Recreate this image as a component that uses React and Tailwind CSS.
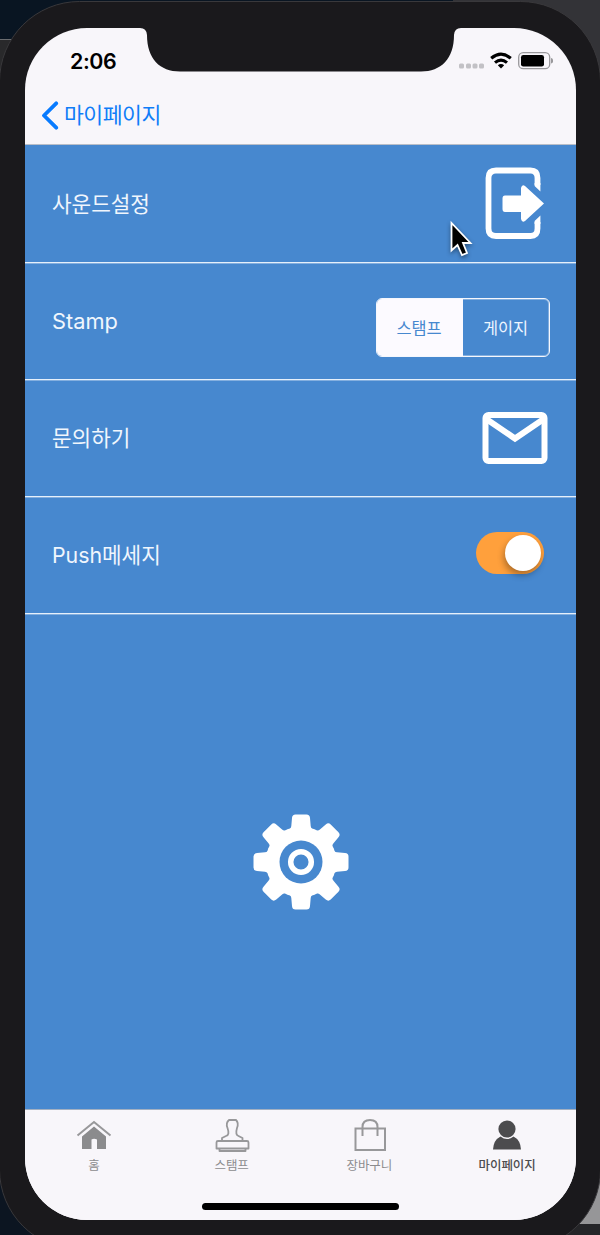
import React from "react";

const font = "font-['Inter','Noto_Sans_CJK_KR',sans-serif]";

function Row({ label, height, children }) {
  return (
    <div className={`flex items-center border-b border-[#e6f0fb] pl-[27px] shadow-[0_1px_0_#ffffff55] ${height}`}>
      <span className="flex-1 text-[21.3px] font-normal leading-[30px] text-[#f0f6fd]">{label}</span>
      {children}
    </div>
  );
}

function Tab({ label, active, children }) {
  return (
    <div className={`flex flex-1 flex-col items-center ${active ? "text-[#4c4c4e]" : "text-[#98989a]"}`}>
      <svg width="38" height="38" viewBox="0 0 38 38" fill="none">{children}</svg>
      <span className={`mt-[2px] text-[12.5px] leading-[16px] tracking-[-0.1px] ${active ? "font-medium" : "text-[#8c8c8e]"}`}>{label}</span>
    </div>
  );
}

export default function App() {
  return (
    <div className={`relative h-[1235px] w-[600px] overflow-hidden bg-[#151517] ${font}`}>
      <svg className="absolute inset-0" width="600" height="1235">
        <rect width="453" height="39" fill="#091522" />
        <rect y="39" width="60" height="1" fill="#6a6c6f" />
        <rect y="40" width="60" height="400" fill="#29292b" />
        <rect x="453" width="147" height="246" fill="#333337" />
        <rect y="1150" width="60" height="85" fill="#0c1521" />
        <rect x="540" y="1140" width="60" height="84" fill="#969698" />
        <rect x="540" y="1224" width="60" height="11" fill="#252528" />
        <rect x="-0.5" y="1.5" width="601" height="1248" rx="80" fill="#1a191c" stroke="#39383b" />
      </svg>

      <div className="relative mt-[28px] ml-[25px] flex h-[1192px] w-[551px] flex-col overflow-hidden rounded-[62px] bg-[#f8f6fa]">
        <header className="h-[117px] shrink-0 border-b border-[#b9bec8]">
          <div className="flex h-[65px] items-center">
            <span className="ml-[45px] w-[60px] text-[21.4px] font-semibold leading-[24px] tracking-[-0.4px] text-black">2:06</span>
            <div className="mr-[23px] flex flex-1 items-center justify-end">
              <svg width="96" height="24" viewBox="0 0 96 24">
                <g fill="#c2c1c5">
                  <rect x="2" y="14.5" width="5" height="5" rx="1.5" />
                  <rect x="9" y="14.5" width="5" height="5" rx="1.5" />
                  <rect x="15.5" y="14.5" width="5" height="5" rx="1.5" />
                  <rect x="22" y="14.5" width="5" height="5" rx="1.5" />
                </g>
                <g fill="none" stroke="black" strokeWidth="3.1">
                  <path d="M34.2 9.2Q44 1 53.8 9.2" />
                  <path d="M38 13.6Q44 8.5 50 13.6" />
                </g>
                <path d="M44 19.5L40.8 16.3Q44 13.5 47.2 16.3Z" />
                <rect x="61.7" y="3.7" width="31" height="16" rx="4.5" fill="none" stroke="#99989b" strokeWidth="1.3" />
                <rect x="64" y="6" width="23" height="11.5" rx="2.3" />
                <path d="M94 9Q96.2 9.5 96.2 11.7T94 14.5Z" fill="#99989b" />
              </svg>
            </div>
          </div>
          <div className="flex h-[43px] items-center text-[#0f7df8]">
            <svg className="ml-[16px]" width="18" height="30" viewBox="0 0 18 30" fill="none">
              <path d="M15.2 3.3L3 15.5L15.2 27.7" stroke="#087bff" strokeWidth="3.8" strokeLinecap="round" strokeLinejoin="round" />
            </svg>
            <span className="ml-[5px] text-[21.6px] leading-[30px] tracking-[-0.5px]">마이페이지</span>
          </div>
        </header>

        <main className="flex flex-1 flex-col bg-[#4788cf]">
          <Row label="사운드설정" height="h-[118px]">
            <svg className="mt-[-2px] mr-[30px]" width="62" height="74" viewBox="0 0 62 74">
              <path d="M53.5 19V12Q53.5 4.5 46.5 4.5H12Q4.5 4.5 4.5 12V62.5Q4.500 70 12 70H46.5Q53.5 70 53.5 62.5V56" fill="none" stroke="white" strokeWidth="5.8" />
              <path d="M50.6 17H56.4V25.5L50.6 20ZM50.6 58H56.4V49.500L50.6 55Z" fill="white" />
              <path d="M21 29.500H37V22Q38 18 41 20L60 37.5L41 55Q38 57 37 53V46H21Q18.500 46 18.500 43V32.5Q18.500 29.5 21 29.5Z" fill="white" />
            </svg>
          </Row>
          <Row label={<span className="text-[21.8px]">Stamp</span>} height="h-[117px]">
            <div className="mt-[13px] mr-[26px] flex h-[59px] w-[174px] overflow-hidden rounded-[6px] border border-[#f5f7fd] text-[16.4px] shadow-[inset_0_0_0_1px_#ffffff55]">
              <div className="flex w-[86px] items-center justify-center bg-[#fcfaff] pt-px pr-[2px] text-[#4788cf]">스탬프</div>
              <div className="flex flex-1 items-center justify-center pt-px pr-px text-[#edf5ff]">게이지</div>
            </div>
          </Row>
          <Row label="문의하기" height="h-[117px]">
            <svg className="mr-[28px]" width="66" height="54" viewBox="0 0 66 54" fill="none" stroke="white">
              <rect x="3.5" y="4" width="59" height="46" rx="3" strokeWidth="6" />
              <path d="M5 8.5L33 27.5L61 8.5" strokeWidth="6" />
            </svg>
          </Row>
          <Row label="Push메세지" height="h-[117px]">
            <div className="mt-[-5px] mr-[32px] flex h-[42px] w-[68px] items-center justify-end rounded-full bg-[#ffa03c] pr-[3px]">
              <div className="size-[36px] rounded-full bg-white shadow-[-1px_4px_7px_#0005]" />
            </div>
          </Row>
          <div className="flex flex-1 items-center justify-center">
            <svg width="96" height="96" viewBox="-48 -48 96 96" fill="white">
              {[0, 45, 90, 135].map((angle) => (
                <path key={angle} transform={`rotate(${angle})`} d="M-5.5-47.5H5.5Q8.8-47.5 9-44L9.7-36Q10-33 14-31V31Q10 33 9.7 36L9 44Q8.8 47.5 5.5 47.5H-5.5Q-8.8 47.5-9 44L-9.7 36Q-10 33-14 31V-31Q-10-33-9.7-36L-9-44Q-8.8-47.5-5.5-47.5Z" />
              ))}
              <circle r="35.5" />
              <circle r="21.5" fill="#4788cf" />
              <circle r="10.3" fill="none" stroke="white" strokeWidth="5.5" />
            </svg>
          </div>
        </main>

        <footer className="flex h-[111px] shrink-0 flex-col border-t border-[#a3b0c2] bg-[#f8f6fa]">
          <nav className="flex pt-[8px]">
            <Tab label="홈">
              <path d="M2.5 17.5L19 4L35.5 17.5" stroke="currentColor" strokeWidth="2" />
              <path d="M7 18.5L19 8.5L31 18.5V31H22V21.5Q19 20 16.5 21.5V31H7Z" fill="#8b8b8d" />
            </Tab>
            <Tab label="스탬프">
              <path d="M16 2H23Q26 5 24 10Q22 17 25.5 18L29.5 20V23H9V20L13 18Q17 17 14.5 10Q12.5 5 16 2ZM5 23H34Q35.5 23 35.5 24.5V30.5H3.5V24.5Q3.5 23 5 23ZM6.5 31V33H32.5V31" stroke="currentColor" strokeWidth="1.8" strokeLinejoin="round" />
            </Tab>
            <Tab label="장바구니">
              <path d="M5.5 10.5H35V32H5.5ZM12.5 18V9Q12.5 2 20 2T27.5 9V18" stroke="currentColor" strokeWidth="2" />
            </Tab>
            <Tab label="마이페이지" active>
              <circle cx="19" cy="11" r="8.6" fill="currentColor" />
              <path d="M12.5 18.5Q19 23.5 25.5 18.5Q32.5 22 33 31.5H5Q5.5 22 12.5 18.5Z" fill="currentColor" />
            </Tab>
          </nav>
          <div className="mx-auto mt-auto mb-[10px] h-[7px] w-[197px] rounded-full bg-black" />
        </footer>
      </div>

      <svg className="absolute top-[27px] left-[137px]" width="327" height="46" viewBox="0 0 327 46">
        <path d="M0 0V1H3Q9.5 1 10 8C10 32 23 44.5 43 44.5H284C304 44.5 317 32 317 8Q317.5 1 324 1H327V0Z" fill="#1a191c" />
      </svg>
      <svg className="absolute top-[219px] left-[448px] drop-shadow-[0_2px_2px_#0006]" width="26" height="40" viewBox="0 0 26 40">
        <path d="M3.5 4V31.5L9.5 26L14 36L19 34L15 24H22.5Z" fill="black" stroke="white" strokeWidth="1.8" />
      </svg>
    </div>
  );
}
